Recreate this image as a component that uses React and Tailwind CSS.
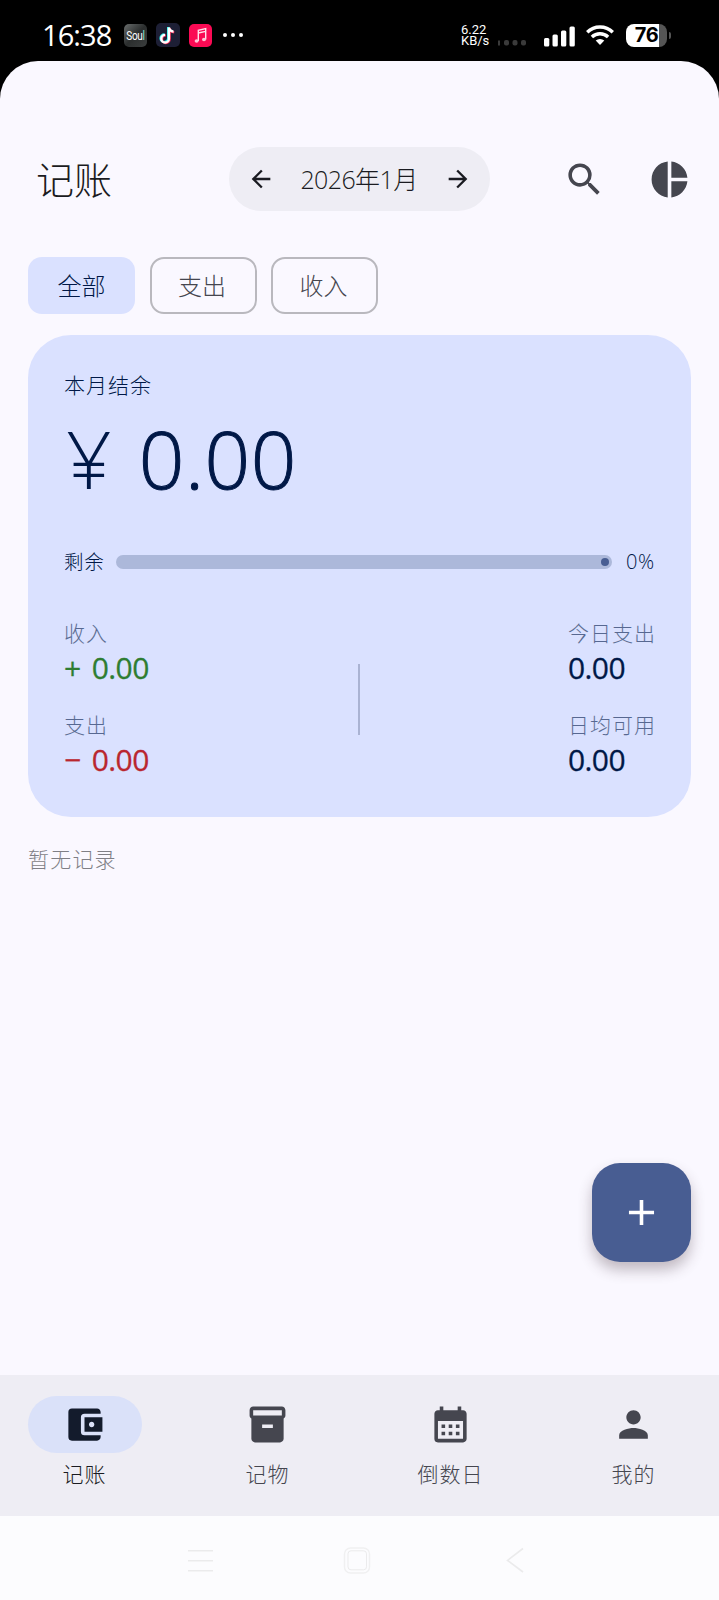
import React, { useState } from 'react';
import {
  MdAccountBalanceWallet,
  MdAdd,
  MdArrowBack,
  MdArrowForward,
  MdCalendarMonth,
  MdInventory2,
  MdPerson,
  MdPieChart,
  MdSearch,
} from 'react-icons/md';

const filters = ['全部', '支出', '收入'];

const tabs = [
  { id: 'ledger', label: '记账', icon: MdAccountBalanceWallet },
  { id: 'items', label: '记物', icon: MdInventory2 },
  { id: 'countdown', label: '倒数日', icon: MdCalendarMonth },
  { id: 'me', label: '我的', icon: MdPerson },
];

function StatusBar() {
  return (
    <div className="flex h-[61px] items-center bg-black pt-[9px] pl-[42px] pr-[48px] text-white">
      <span className="w-[82px] pb-[2px] text-[29px] leading-none tracking-[-0.9px] whitespace-nowrap">16:38</span>

      {/* Notification icons */}
      <div className="flex items-center gap-[9px]">
        <span className="flex size-[23px] items-center justify-center rounded-[5px] bg-linear-to-br from-[#6b6f6f] via-[#2b2e2e] to-[#3b3e3e] font-['Roboto',sans-serif] text-[10px] tracking-[-0.3px]">
          <span className="scale-y-120">
            Sou<span className="text-[#7fe3d6]">l</span>
          </span>
        </span>
        <span className="flex size-[24px] items-center justify-center rounded-[5px] bg-[#1d1f35]">
          <svg viewBox="0 0 24 24" className="size-[24px]" fill="none" strokeWidth="2.4">
            <path d="M12.2 4v11.2a3.8 3.8 0 1 1-3.8-3.8M12.2 4.2c.5 2.4 2 3.8 4.6 4" stroke="#25f4ee" />
            <path d="M13.6 5v11.2a3.8 3.8 0 1 1-3.8-3.8M13.6 5.2c.5 2.4 2 3.8 4.6 4" stroke="#fe2c55" />
            <path d="M12.9 4.4v11.3a3.8 3.8 0 1 1-3.8-3.8M12.9 4.6c.5 2.4 2 3.8 4.6 4" stroke="#fff" />
          </svg>
        </span>
        <span className="flex size-[23px] items-center justify-center rounded-[5px] bg-[#fb0a54]">
          <svg viewBox="0 0 23 23" className="size-[23px]">
            <path d="M9.3 17V6.2l7.4-1.6v10.8M9.3 9l7.4-1.6" fill="none" stroke="#ffe3ec" strokeWidth="1.4" />
            <ellipse cx="7.6" cy="17" rx="2" ry="1.7" fill="#ffc4d6" />
            <ellipse cx="15" cy="15.5" rx="2" ry="1.7" fill="#ffc4d6" />
          </svg>
        </span>
      </div>
      <div className="ml-[11px] flex gap-[4px]">
        <span className="size-[4px] rounded-full bg-white" />
        <span className="size-[4px] rounded-full bg-white" />
        <span className="size-[4px] rounded-full bg-white" />
      </div>

      <div className="ml-auto flex items-center">
        {/* Network speed */}
        <p className="w-[37px] font-['Roboto',sans-serif] text-[13px] leading-[11.5px]">
          6.22
          <br />
          KB/s
        </p>
        <svg viewBox="0 0 29 6" className="mt-[15px] h-[6px] w-[29px]" fill="#3a3a3a">
          <rect x="0" y="0.5" width="2" height="5" />
          <rect x="6" y="0" width="5" height="5.5" rx="2" />
          <rect x="14.5" y="0" width="5" height="5.5" rx="2" />
          <rect x="23" y="0" width="5" height="5.5" rx="2" />
        </svg>
        <svg viewBox="0 0 31 21" className="ml-[17px] mt-[3px] h-[21px] w-[31px]" fill="#fff">
          <rect x="0" y="12" width="5.3" height="8.5" rx="1.5" />
          <rect x="8.5" y="8.5" width="5.3" height="12" rx="1.5" />
          <rect x="17" y="4.5" width="5.3" height="16" rx="1.5" />
          <rect x="25.5" y="0.5" width="5.3" height="20" rx="1.5" />
        </svg>
        <svg viewBox="0 0 28 22" className="ml-[11px] h-[22px] w-[28px]" fill="none" stroke="#fff" strokeWidth="3.4">
          <path d="M1.2 8.2a18.3 18.3 0 0 1 25.6 0" />
          <path d="M5.9 13a11.7 11.7 0 0 1 16.2 0" />
          <path d="M14 21l-4.3-4.4a6.3 6.3 0 0 1 8.6 0z" fill="#fff" stroke="none" />
        </svg>
        <div className="ml-[12px] flex h-[23px] w-[41px] items-center justify-center rounded-[8px] bg-linear-to-r from-white from-80% to-[#555] to-80% font-['Inter',sans-serif] text-[20px] font-bold tracking-[-0.5px] text-black">
          76
        </div>
        <span className="ml-[2px] h-[7px] w-[2px] rounded-r-full bg-[#555]" />
      </div>
    </div>
  );
}

function Header() {
  return (
    <header className="flex h-[64px] items-center">
      <h1 className="w-[193px] text-[38px] leading-none font-light">记账</h1>
      <div className="flex h-[64px] w-[261px] items-center justify-between rounded-full bg-[#eeedf4] px-[18px]">
        <MdArrowBack className="size-[28px]" />
        <span className="pr-[1px] text-[25px] leading-none font-light tracking-[-0.6px] whitespace-nowrap">
          2026年1月
        </span>
        <MdArrowForward className="size-[28px]" />
      </div>
      <div className="ml-auto flex gap-[42px] text-[#45464f]">
        <MdSearch className="size-[43px]" />
        <MdPieChart className="size-[43px]" />
      </div>
    </header>
  );
}

function Stat({ label, value, color }) {
  return (
    <div>
      <p className="h-[29px] text-[21px] leading-[29px] font-light tracking-[1px] whitespace-nowrap text-[#001847]/60">
        {label}
      </p>
      <p
        className={`h-[40px] text-[30px] leading-[40px] tracking-[-0.6px] [word-spacing:4px] whitespace-pre [-webkit-text-stroke:0.3px] ${color}`}
      >
        {value}
      </p>
    </div>
  );
}

function BalanceCard() {
  return (
    <section className="mt-[21px] h-[482px] rounded-[43px] bg-[#dae1ff] px-[36px] pt-[36px] text-[#001847]">
      <p className="text-[21px] leading-[28px] font-light tracking-[1px]">本月结余</p>
      <p className="mt-[9px] h-[100px] pl-[2px] text-[80px] leading-[100px] font-light tracking-[0.6px] [word-spacing:5px] whitespace-pre">
        ¥ <span className="[-webkit-text-stroke:1px]">0.00</span>
      </p>

      <div className="mt-[39px] flex h-[30px] items-center">
        <span className="w-[52px] text-[19.5px] font-light tracking-[0.8px]">剩余</span>
        <div className="flex h-[14px] w-[496px] items-center justify-end rounded-full bg-[#acb8da] pr-[3px]">
          <span className="size-[8px] rounded-full bg-[#485d92]" />
        </div>
        <span className="ml-[14px] text-[20px] font-light tracking-[0.5px]">0%</span>
      </div>

      <div className="mt-[42px] flex items-center justify-between">
        <div className="flex w-[86px] flex-col gap-[23px]">
          <Stat label="收入" value="+ 0.00" color="text-[#2e7d32]" />
          <Stat label="支出" value="− 0.00" color="text-[#b9272f]" />
        </div>
        <span className="h-[71px] w-[2px] bg-[#aab3d3]" />
        <div className="flex w-[87px] flex-col gap-[23px]">
          <Stat label="今日支出" value="0.00" color="text-[#001847]" />
          <Stat label="日均可用" value="0.00" color="text-[#001847]" />
        </div>
      </div>
    </section>
  );
}

function SystemNav() {
  return (
    <div className="h-[84px] bg-[#fcfcfe] pt-[30px] pl-[187px]">
      <svg viewBox="0 0 340 28" className="h-[28px] w-[340px]" fill="none" stroke="#ebebec" strokeWidth="1.6">
        <path d="M1 4.7h25M1 14.7h25M1 24.7h25" />
        <rect x="157.5" y="2" width="25" height="25" rx="6" stroke="#f0f0f1" strokeWidth="1.4" />
        <rect x="161" y="4.8" width="18.5" height="19" rx="3" strokeWidth="1" />
        <path d="M336 2.5L320.5 14.5L336 26" />
      </svg>
    </div>
  );
}

export default function App() {
  const [filter, setFilter] = useState('全部');
  const [tab, setTab] = useState('ledger');

  return (
    <div className="flex h-[1600px] w-[719px] flex-col bg-black font-['Open_Sans','Noto_Sans_CJK_SC',sans-serif] text-[#1a1b21]">
      <StatusBar />

      <main className="relative flex-1 rounded-t-[38px] bg-[#faf8ff] px-[28px] pt-[86px]">
        <div className="pl-[8px]">
          <Header />
        </div>

        <div className="mt-[46px] flex gap-[14.5px]">
          {filters.map((name) => (
            <button
              key={name}
              onClick={() => setFilter(name)}
              className={`h-[57px] w-[107px] rounded-[14px] text-[24px] font-light ${
                filter === name
                  ? 'bg-[#dae1ff] text-[#001847]'
                  : 'border-2 border-[#b9b8be] pr-[2px] text-[#45464f]'
              }`}
            >
              {name}
            </button>
          ))}
        </div>

        <BalanceCard />

        <p className="mt-[27px] text-[21px] leading-[30px] font-light tracking-[1.2px] text-[#7f7f86]">暂无记录</p>

        <button className="absolute right-[28px] bottom-[113px] flex size-[99px] items-center justify-center rounded-[28px] bg-[#485d92] text-white shadow-[0_8px_14px_rgba(60,40,50,0.3)]">
          <MdAdd className="size-[43px]" />
        </button>
      </main>

      <nav className="flex h-[141px] gap-[14px] bg-[#eeedf4] pt-[21px] pr-[1px]">
        {tabs.map(({ id, label, icon: Icon }) => (
          <button key={id} onClick={() => setTab(id)} className="flex flex-1 flex-col items-center">
            <span
              className={`flex h-[57px] w-[114px] items-center justify-center rounded-full ${
                tab === id ? 'bg-[#dae1f9] text-[#131b2c]' : 'text-[#45464f]'
              }`}
            >
              <Icon className="size-[43px]" />
            </span>
            <span
              className={`mt-[7px] text-[21px] leading-[29px] font-light tracking-[1px] ${
                tab === id ? 'text-[#1a1b21]' : 'text-[#45464f]'
              }`}
            >
              {label}
            </span>
          </button>
        ))}
      </nav>

      <SystemNav />
    </div>
  );
}
